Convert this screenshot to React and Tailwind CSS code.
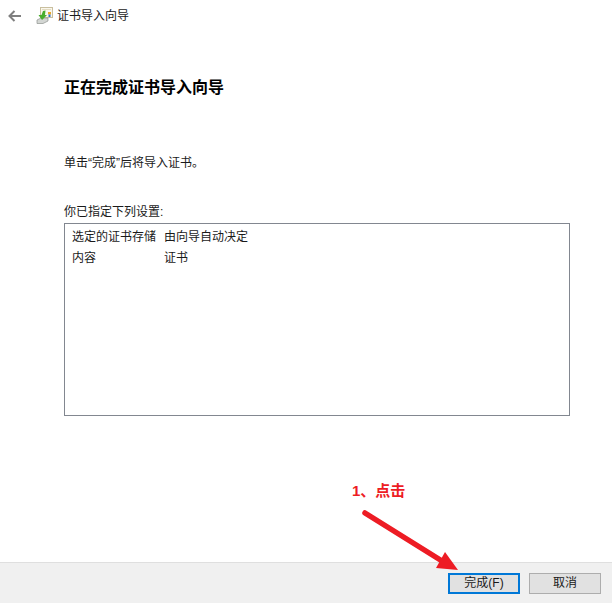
import React from 'react';

const FONT = 'font-["Liberation_Sans","Noto_Sans_CJK_SC",sans-serif]';

const CertIcon = () => (
  <svg width="17" height="17" viewBox="0 0 17 17" className="shrink-0">
    <rect x="4.5" y="0.5" width="12" height="10" fill="#faf7ec" stroke="#c9bf9f" />
    <path d="M6 2 H15 V3 H6 Z" fill="#e4dcc2" />
    <path d="M1 13 L5 11 L12 11 L12 14 L7 16.5 L1 16.5 Z" fill="#d3d6d3" stroke="#8f938f" strokeWidth="0.7" />
    <path d="M7 4 L9.5 3.5 L9 8 L11 8 L6 13 L2.5 8 L5.5 8 Z" fill="#47ad2c" />
    <rect x="12" y="5" width="3" height="2.5" fill="#e8a628" />
    <rect x="12.5" y="7.5" width="2" height="2.5" fill="#2f6fc4" />
  </svg>
);

const BackArrow = () => (
  <svg width="13" height="12" viewBox="0 0 13 12" fill="none" stroke="#7f7f7f" strokeWidth="2">
    <path d="M13 6 H2" />
    <path d="M6.5 1 L1.5 6 L6.5 11" />
  </svg>
);

const Annotation = () => (
  <svg width="110" height="70" viewBox="0 0 110 70" className="absolute left-[358px] top-[506px]">
    <path d="M7 7 L84 55" stroke="#ed1c24" strokeWidth="5.5" strokeLinecap="round" />
    <path d="M78 62 L87 46 L100 64 Z" fill="#ed1c24" />
  </svg>
);

export default function App() {
  const rows = [
    ['选定的证书存储', '由向导自动决定'],
    ['内容', '证书'],
  ];

  return (
    <div className={`${FONT} relative w-[612px] h-[603px] bg-white flex flex-col text-xs text-[#1a1a1a] overflow-hidden`}>
      <div className="h-[31px] flex items-center pl-[8px]">
        <BackArrow />
        <div className="ml-[15px] mr-[4px]"><CertIcon /></div>
        <span>证书导入向导</span>
      </div>

      <div className="flex-1 flex flex-col px-[64px]">
        <h1 className="mt-[45px] text-[16px] leading-[24px] font-bold text-black">正在完成证书导入向导</h1>
        <p className="mt-[55px] leading-[16px]">单击“完成”后将导入证书。</p>
        <p className="mt-[33px] leading-[16px]">你已指定下列设置:</p>
        <div className="mt-[3px] w-[506px] h-[193px] border border-[#828790] pt-[2px] pl-[7px]">
          {rows.map(([name, value]) => (
            <div key={name} className="flex h-[21px] items-center">
              <span className="w-[92px]">{name}</span>
              <span>{value}</span>
            </div>
          ))}
        </div>
      </div>

      <div className="h-[41px] bg-[#f0f0f0] border-t border-[#dfdfdf] flex justify-end items-center gap-[9px] pr-[11px]">
        <button className="w-[72px] h-[21px] bg-[#e1e1e1] border-2 border-[#0078d7] text-[#1a1a1a] leading-none">完成(F)</button>
        <button className="w-[72px] h-[21px] bg-[#e1e1e1] border border-[#adadad] text-[#1a1a1a] leading-none">取消</button>
      </div>

      <span className="absolute left-[352px] top-[481px] text-[15px] leading-[20px] font-bold text-[#ed1c24]">1、点击</span>
      <Annotation />
    </div>
  );
}
